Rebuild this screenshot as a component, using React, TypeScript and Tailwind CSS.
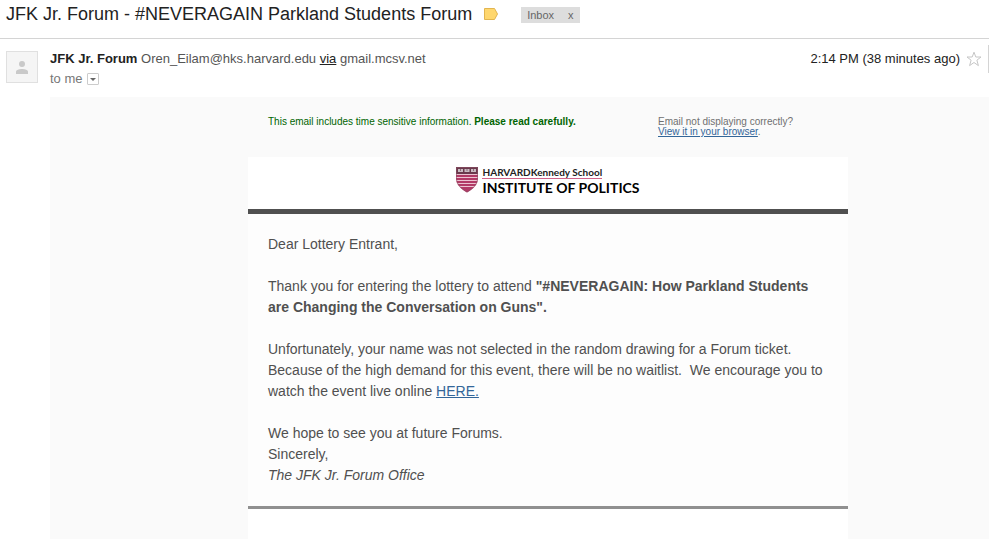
function LabelIcon() {
  return (
    <svg width="15" height="12" viewBox="0 0 15 12" aria-hidden="true">
      <path d="M0.5 0.5H10.5L13.5 6L10.5 11.5H0.5Z" fill="#ffd76e" stroke="#e2b550" />
    </svg>
  );
}

function StarIcon() {
  return (
    <svg width="16" height="16" viewBox="0 0 16 16" aria-hidden="true">
      <path
        d="M8 1.2L9.8 6H15L10.9 9.2L12.4 14.6L8 11.5L3.6 14.6L5.1 9.2L1 6H6.2Z"
        fill="#fff"
        stroke="#c6c6c6"
      />
    </svg>
  );
}

function PersonIcon() {
  return (
    <svg width="12" height="13" viewBox="0 0 12 13" aria-hidden="true">
      <circle cx="6" cy="3" r="3" fill="#c9c9c9" />
      <path d="M0 13V10.8C0 8.8 3.5 8 6 8S12 8.8 12 10.8V13Z" fill="#c9c9c9" />
    </svg>
  );
}

function Shield() {
  return (
    <svg width="22" height="26" viewBox="0 0 22 26" aria-hidden="true">
      <defs>
        <clipPath id="shield">
          <path d="M0 0H22V11C22 18 17 22 11 25.500C5 22 0 18 0 11Z" />
        </clipPath>
      </defs>
      <g clipPath="url(#shield)">
        <rect width="22" height="26" fill="#b23a66" />
        <rect width="22" height="7" fill="#6b3a4d" />
        <path d="M2 2H7V5H2ZM8.500 2H13.500V5H8.500ZM15 2H20V5H15Z" fill="#c9bcc2" />
        <path d="M4.500 2V4M11 2V4M17.500 2V4" stroke="#8f6b7a" />
        <path
          d="M0 7.500H22M0 10.500H22M0 13.500H22M0 16.500H22M0 19.500H22"
          stroke="#ecc3d1"
        />
      </g>
      <path
        d="M0.5 0.5H21.500V11C21.500 17.500 17 21.500 11 25C5 21.500 0.500 17.500 0.500 11Z"
        fill="none"
        stroke="#8a5065"
        strokeOpacity="0.6"
      />
    </svg>
  );
}

function Subject() {
  return (
    <header className="flex h-[39px] items-start border-b border-[#d4d4d4] pt-1 pl-1.5">
      <h1 className="text-[18px] leading-5 text-[#222]">
        JFK Jr. Forum - #NEVERAGAIN Parkland Students Forum
      </h1>
      <button aria-label="Mark as important" className="mt-1 ml-3 h-3">
        <LabelIcon />
      </button>
      <div className="mt-[3px] ml-[22px] flex h-4 items-center bg-[#ddd] px-1.5 text-[11px] leading-4 text-[#666]">
        <span>Inbox</span>
        <button aria-label="Remove label Inbox" className="ml-3.5">
          x
        </button>
      </div>
    </header>
  );
}

function Sender() {
  return (
    <section className="flex h-[58px] justify-between pt-1.5">
      <div className="flex pl-1.5">
        <div className="mt-1.5 flex size-8 items-center justify-center border border-[#e0e0e0] bg-[#f5f5f5]">
          <PersonIcon />
        </div>
        <div className="ml-3 pt-1 text-[13px] leading-5">
          <p className="text-[#555]">
            <b className="text-[#222]">JFK Jr. Forum</b> Oren_Eilam@hks.harvard.edu{" "}
            <a href="#via" className="text-[#222] underline">
              via
            </a>{" "}
            gmail.mcsv.net
          </p>
          <p className="flex items-center text-[#777]">
            to me
            <button
              aria-label="Show details"
              className="ml-1 flex size-3 items-center justify-center rounded-[1px] border border-[#ccc]"
            >
              <svg width="6" height="3" viewBox="0 0 6 3" aria-hidden="true">
                <path d="M0 0H6L3 3Z" fill="#666" />
              </svg>
            </button>
          </p>
        </div>
      </div>
      <div className="flex h-7 items-center border-r border-[#d4d4d4] pr-1.5 text-[13px] text-[#222]">
        <time>2:14 PM (38 minutes ago)</time>
        <button aria-label="Star" className="ml-1.5">
          <StarIcon />
        </button>
      </div>
    </section>
  );
}

function Preheader() {
  return (
    <div className="flex h-[60px] px-5 pt-5 text-[10px] leading-[10px]">
      <p className="w-[390px] text-[#006400]">
        This email includes time sensitive information. <b>Please read carefully.</b>
      </p>
      <p className="text-[#707070]">
        Email not displaying correctly?
        <br />
        <a href="#browser" className="text-[#336699] underline">
          View it in your browser
        </a>
        .
      </p>
    </div>
  );
}

function Brand() {
  return (
    <div className="flex h-[57px] justify-center border-b-[5px] border-[#505050] bg-white pt-2.5 font-[Lato,sans-serif] text-[#222]">
      <Shield />
      <div className="ml-1 flex flex-col items-start whitespace-nowrap">
        <p className="border-b border-[#d0648a] text-[10px] leading-[11px] font-bold">
          <span>HARVARD</span>Kennedy School
        </p>
        <p className="text-[14px] leading-[18px] font-bold text-black">INSTITUTE OF POLITICS</p>
      </div>
    </div>
  );
}

function Letter() {
  return (
    <div className="flex flex-col gap-[21px] border-b-[3px] border-[#909090] bg-[#fdfdfd] px-5 pt-5 pb-5 text-[14px] leading-[21px] text-[#505050]">
      <p>Dear Lottery Entrant,</p>
      <p>
        Thank you for entering the lottery to attend{" "}
        <b>"#NEVERAGAIN: How Parkland Students are Changing the Conversation on Guns".</b>
      </p>
      <p>
        Unfortunately, your name was not selected in the random drawing for a Forum ticket. Because
        of the high demand for this event, there will be no waitlist.&nbsp; We encourage you to
        watch the event live online{" "}
        <a href="#live" className="text-[#336699] underline">
          HERE.
        </a>
      </p>
      <p>
        We hope to see you at future Forums.
        <br />
        Sincerely,
        <br />
        <i>The JFK Jr. Forum Office</i>
      </p>
    </div>
  );
}

export default function App() {
  return (
    <div className="flex min-h-screen flex-col bg-white font-['Liberation_Sans',Arial,sans-serif]">
      <Subject />
      <Sender />
      <main className="ml-[50px] flex grow justify-center bg-[#fafafa] pl-[57px]">
        <article className="flex w-full max-w-[600px] flex-col">
          <Preheader />
          <Brand />
          <Letter />
          <div className="min-h-7 grow bg-white" />
        </article>
      </main>
    </div>
  );
}
